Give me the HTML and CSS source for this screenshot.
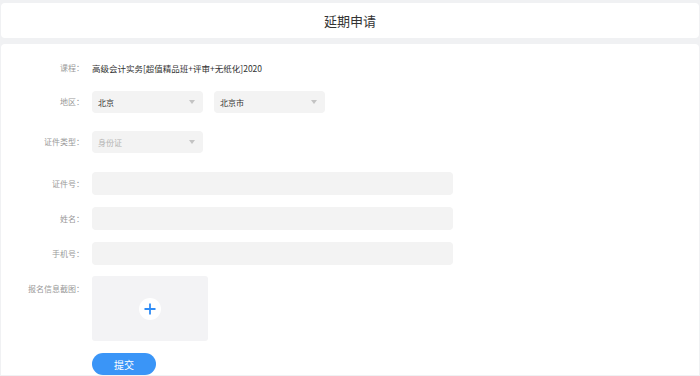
FILE: index.html
```html
<!DOCTYPE html>
<html lang="zh">
<head>
<meta charset="utf-8">
<title>延期申请</title>
<link rel="stylesheet" href="styles.css">
</head>
<body>
<div class="page">
  <header class="header">延期申请</header>
  <main class="card">
    <div class="row row-course">
      <div class="label">课程：</div>
      <div class="value">高级会计实务[超值精品班+评审+无纸化]2020</div>
    </div>
    <div class="row row-region">
      <div class="label">地区：</div>
      <div class="selects">
        <div class="select"><span>北京</span><i class="arrow"></i></div>
        <div class="select"><span>北京市</span><i class="arrow"></i></div>
      </div>
    </div>
    <div class="row row-idtype">
      <div class="label">证件类型：</div>
      <div class="select"><span class="placeholder">身份证</span><i class="arrow"></i></div>
    </div>
    <div class="row row-idno">
      <div class="label">证件号：</div>
      <div class="input"></div>
    </div>
    <div class="row">
      <div class="label">姓名：</div>
      <div class="input"></div>
    </div>
    <div class="row">
      <div class="label">手机号：</div>
      <div class="input"></div>
    </div>
    <div class="row row-upload">
      <div class="label label-top">报名信息截图：</div>
      <div class="upload">
        <div class="plus-circle">
          <svg width="12" height="12" viewBox="0 0 12 12"><path d="M6 0.5V11.5M0.5 6H11.5" stroke="#2f8cf6" stroke-width="1.8" fill="none"/></svg>
        </div>
      </div>
    </div>
    <div class="row row-btn">
      <div class="label"></div>
      <button class="submit">提交</button>
    </div>
  </main>
</div>
</body>
</html>
```
FILE: styles.css
```css
html, body {
  margin: 0;
  padding: 0;
  background: #f0f1f3;
  overflow: hidden;
}
body {
  font-family: "Noto Sans CJK SC", "Noto Sans", sans-serif;
  height: 376px;
}
.page {
  padding: 3px 1px 0 1px;
  display: flex;
  flex-direction: column;
  gap: 6px;
}
.header {
  height: 35px;
  background: #fff;
  border-radius: 4px;
  display: flex;
  align-items: center;
  justify-content: center;
  font-size: 13px;
  color: #333;
}
.card {
  background: #fff;
  border-radius: 4px 4px 0 0;
  padding-top: 13px;
  display: flex;
  flex-direction: column;
  gap: 12px;
  height: 318px;
}
.row {
  display: flex;
  align-items: center;
  gap: 8px;
}
.label {
  width: 83px;
  flex: none;
  text-align: right;
  font-size: 8px;
  color: #999;
  line-height: 10px;
}
.label-top {
  align-self: flex-start;
  padding-top: 8px;
}
.row-course {
  height: 23px;
}
.value {
  font-size: 8.5px;
  color: #333;
  line-height: 10px;
}
.selects {
  display: flex;
  gap: 11px;
}
.select {
  width: 111px;
  height: 22px;
  background: #f3f3f3;
  border-radius: 4px;
  display: flex;
  align-items: center;
  justify-content: space-between;
  padding: 0 8px 0 6px;
  box-sizing: border-box;
  font-size: 8px;
  color: #333;
}
.placeholder {
  color: #b4b4b4;
}
.arrow {
  width: 0;
  height: 0;
  border-left: 3px solid transparent;
  border-right: 3px solid transparent;
  border-top: 4px solid #c3c3c3;
}
.row-idtype {
  margin-top: 6px;
}
.row-idno {
  margin-top: 7px;
}
.row-upload {
  margin-top: -1px;
}
.input {
  width: 361px;
  height: 23px;
  background: #f3f3f3;
  border-radius: 4px;
}
.upload {
  width: 116px;
  height: 65px;
  background: #f3f3f5;
  border-radius: 3px;
  display: flex;
  align-items: center;
  justify-content: center;
}
.plus-circle {
  width: 22px;
  height: 22px;
  border-radius: 50%;
  background: #fff;
  display: flex;
  align-items: center;
  justify-content: center;
}
.plus-circle svg {
  display: block;
}
.submit {
  width: 64px;
  height: 22px;
  border: none;
  border-radius: 11px;
  background: #3a95f7;
  color: #fff;
  font-family: "Noto Sans CJK SC", sans-serif;
  font-size: 10px;
  padding: 0;
}
```
